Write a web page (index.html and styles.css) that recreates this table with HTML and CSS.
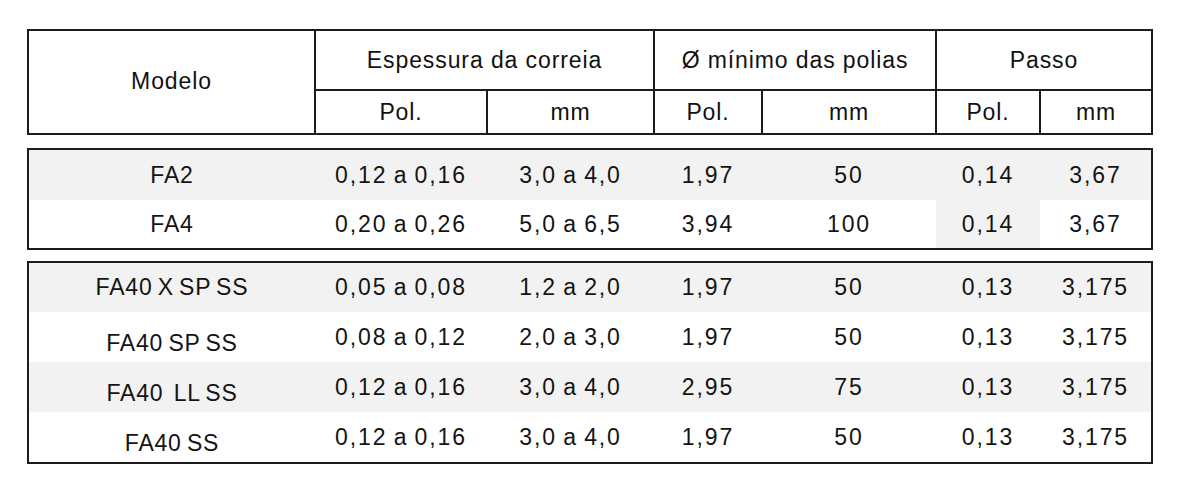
FILE: index.html
```html
<!DOCTYPE html>
<html lang="pt">
<head>
<meta charset="utf-8">
<title>Tabela de correias</title>
<link rel="stylesheet" href="styles.css">
</head>
<body>
<div class="page">
  <div class="head">
    <div class="h h-model">Modelo</div>
    <div class="h h-esp">Espessura da correia</div>
    <div class="h h-dia">Ø mínimo das polias</div>
    <div class="h h-passo">Passo</div>
    <div class="h sub">Pol.</div>
    <div class="h sub">mm</div>
    <div class="h sub">Pol.</div>
    <div class="h sub">mm</div>
    <div class="h sub">Pol.</div>
    <div class="h sub">mm</div>
  </div>

  <div class="group g1">
    <div class="c m shade">FA2</div>
    <div class="c shade">0,12 a 0,16</div>
    <div class="c shade">3,0 a 4,0</div>
    <div class="c shade">1,97</div>
    <div class="c shade">50</div>
    <div class="c shade">0,14</div>
    <div class="c shade">3,67</div>

    <div class="c m">FA4</div>
    <div class="c">0,20 a 0,26</div>
    <div class="c">5,0 a 6,5</div>
    <div class="c">3,94</div>
    <div class="c">100</div>
    <div class="c shade">0,14</div>
    <div class="c">3,67</div>
  </div>

  <div class="group g2">
    <div class="c m shade">FA40 X SP SS</div>
    <div class="c shade">0,05 a 0,08</div>
    <div class="c shade">1,2 a 2,0</div>
    <div class="c shade">1,97</div>
    <div class="c shade">50</div>
    <div class="c shade">0,13</div>
    <div class="c shade">3,175</div>

    <div class="c m low">FA40 SP SS</div>
    <div class="c">0,08 a 0,12</div>
    <div class="c">2,0 a 3,0</div>
    <div class="c">1,97</div>
    <div class="c">50</div>
    <div class="c">0,13</div>
    <div class="c">3,175</div>

    <div class="c m shade low">FA40&nbsp; LL SS</div>
    <div class="c shade">0,12 a 0,16</div>
    <div class="c shade">3,0 a 4,0</div>
    <div class="c shade">2,95</div>
    <div class="c shade">75</div>
    <div class="c shade">0,13</div>
    <div class="c shade">3,175</div>

    <div class="c m low">FA40 SS</div>
    <div class="c">0,12 a 0,16</div>
    <div class="c">3,0 a 4,0</div>
    <div class="c">1,97</div>
    <div class="c">50</div>
    <div class="c">0,13</div>
    <div class="c">3,175</div>
  </div>
</div>
</body>
</html>
```

FILE: styles.css
```css
html, body {
  margin: 0;
  padding: 0;
  background: #ffffff;
}

body {
  font-family: "Liberation Sans", Arial, sans-serif;
  color: #111111;
}

.page {
  width: 1126px;
  margin-left: 27px;
  padding-top: 29px;
  display: flex;
  flex-direction: column;
}

.head {
  display: grid;
  grid-template-columns: 285px 170px 165px 106px 172px 102px 110px;
  grid-template-rows: 58px 42px;
  gap: 2px;
  background: #1c1c1c;
  border: 2px solid #1c1c1c;
}

.h {
  background: #ffffff;
  display: flex;
  align-items: center;
  justify-content: center;
  font-size: 23px;
  letter-spacing: 0.9px;
}

.h-model {
  grid-row: 1 / 3;
  padding-bottom: 2px;
}

.h-esp {
  grid-column: 2 / 4;
}

.h-dia {
  grid-column: 4 / 6;
}

.h-passo {
  grid-column: 6 / 8;
}

.sub {
  padding-top: 1px;
}

.group {
  display: grid;
  grid-template-columns: 286px 172px 167px 108px 174px 104px 111px;
  border: 2px solid #1c1c1c;
  background: #ffffff;
}

.g1 {
  margin-top: 13px;
  grid-template-rows: 50px 48px;
}

.g2 {
  margin-top: 11px;
  grid-template-rows: 49px 50px 50px 50px;
}

.c {
  display: flex;
  align-items: center;
  justify-content: center;
  font-size: 23px;
  letter-spacing: 1.9px;
  word-spacing: -2px;
  color: #141414;
}

.m {
  letter-spacing: 0.8px;
}

.shade {
  background: #f2f2f2;
}

.low {
  padding-top: 12px;
}
```
